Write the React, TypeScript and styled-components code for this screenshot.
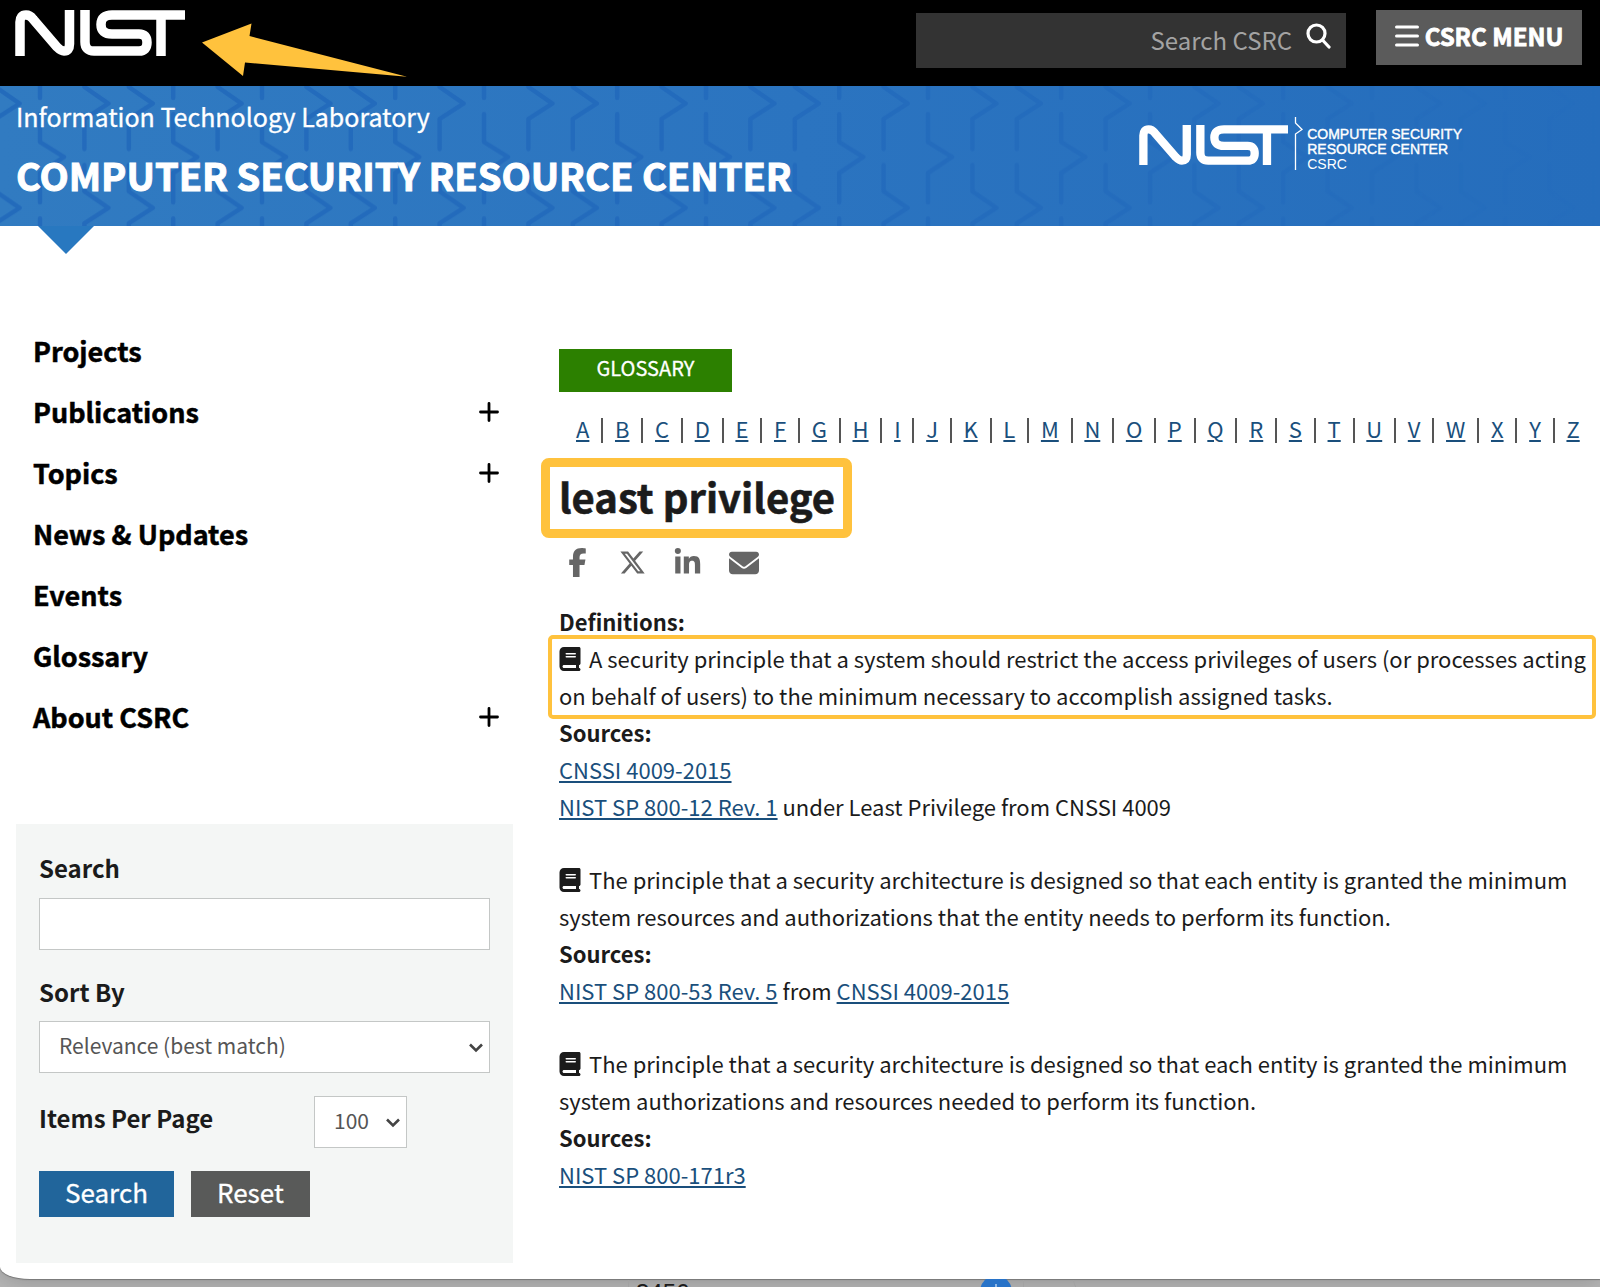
import React from "react";
import styled, { createGlobalStyle } from "styled-components";
import { FaFacebookF, FaXTwitter, FaLinkedinIn, FaEnvelope, FaBook } from "react-icons/fa6";

const GlobalStyle = createGlobalStyle`
  *, *::before, *::after { box-sizing: border-box; }
  body {
    margin: 0;
    background: #b6b6b6;
    color: #1b1b1b;
    font-family: "Noto Sans CJK SC", "Open Sans", sans-serif;
    font-size: 22px;
    line-height: 37px;
  }
  button, input, select { font: inherit; border-radius: 0; margin: 0; }
  a { color: #1a4f7c; text-decoration-thickness: 2px; text-underline-offset: 2px; }
`;

const Desktop = styled.div`
  overflow: hidden;
`;

const Sheet = styled.div`
  background: #fff;
  border-bottom-left-radius: 30px 12px;
  box-shadow: 0 1px 1px #777, 0 2px 24px rgba(0, 0, 0, 0.2);
  position: relative;
`;

const TopBar = styled.header`
  display: flex;
  align-items: flex-start;
  background: #000;
  height: 86px;
  padding: 10px 18px 0 15px;
`;

const HomeLink = styled.a`
  display: block;
  line-height: 0;
`;

const Arrow = styled.svg`
  margin: 12px auto 0 17px;
`;

const SiteSearch = styled.form`
  display: flex;
  align-items: center;
  width: 430px;
  height: 55px;
  margin: 3px 30px 0 0;
  background: #333;
`;

const SiteSearchInput = styled.input`
  flex: 1;
  min-width: 0;
  height: 55px;
  padding: 0 14px 3px 0;
  border: 0;
  background: transparent;
  color: #fff;
  font-size: 24px;
  text-align: right;
  &::placeholder { color: #a3a3a3; opacity: 1; }
`;

const IconButton = styled.button`
  padding: 0 15px 9px 0;
  border: 0;
  background: transparent;
  line-height: 0;
`;

const MenuButton = styled.button`
  display: flex;
  align-items: center;
  justify-content: center;
  gap: 6px;
  width: 206px;
  height: 55px;
  padding: 0 0 4px;
  border: 0;
  background: #5b5b5b;
  color: #fff;
  font-size: 24px;
  font-weight: 700;
  -webkit-text-stroke: 0.8px currentColor;
`;

const Banner = styled.div`
  position: relative;
  display: flex;
  justify-content: space-between;
  height: 140px;
  padding: 12px 138px 0 16px;
  background: linear-gradient(90deg, #317bc1, #2b74c0 50%, #256dbc);
  color: #fff;
`;

const BannerPattern = styled.svg`
  position: absolute;
  inset: 0;
  width: 100%;
  height: 100%;
`;

const BannerText = styled.div`
  position: relative;
`;

const LabName = styled.div`
  font-size: 25px;
  -webkit-text-stroke: 0.3px currentColor;
`;

const SiteName = styled.div`
  margin-top: 12px;
  font-size: 38px;
  font-weight: 700;
  line-height: 56px;
  -webkit-text-stroke: 1px currentColor;
`;

const BannerLogo = styled.div`
  position: relative;
  display: flex;
  align-items: flex-start;
  margin-top: 18px;
`;

const BannerMark = styled.div`
  padding-top: 9px;
  line-height: 0;
`;

const LogoWords = styled.div`
  padding: 11px 0 0 3px;
  font-family: "Liberation Sans", Arial, sans-serif;
  font-size: 14px;
  line-height: 15px;
`;

const LogoLine = styled.div<{ $strong?: boolean }>`
  -webkit-text-stroke: ${(p) => (p.$strong ? "0.4px #fff" : "0")};
`;

const Pointer = styled.div`
  position: absolute;
  left: 38px;
  top: 100%;
  border: 28px solid transparent;
  border-top-color: #2878c0;
  border-bottom: 0;
`;

const Columns = styled.div`
  display: grid;
  grid-template-columns: 497px minmax(0, 1fr);
  gap: 46px;
  padding: 94px 8px 16px 16px;
`;

const Nav = styled.nav`
  padding-bottom: 77px;
`;

const NavRow = styled.div`
  display: flex;
  align-items: center;
  justify-content: space-between;
  height: 61px;
  padding: 0 14px 0 17px;
`;

const NavLink = styled.a`
  color: #000;
  font-size: 27px;
  font-weight: 700;
  text-decoration: none;
  -webkit-text-stroke: 0.5px currentColor;
`;

const Expand = styled.button`
  padding: 0;
  border: 0;
  background: transparent;
  line-height: 0;
`;

const FilterPanel = styled.form`
  padding: 25px 23px 46px;
  background: #f4f6f5;
`;

const Label = styled.label`
  display: block;
  font-size: 24px;
  font-weight: 700;
  line-height: 37px;
`;

const TextBox = styled.input`
  display: block;
  width: 100%;
  height: 52px;
  margin: 12px 0 23px;
  padding: 0 18px;
  border: 1px solid #c4c7c6;
  background: #fff;
`;

const SelectWrap = styled.div`
  position: relative;
`;

const Select = styled.select`
  appearance: none;
  display: block;
  width: 100%;
  height: 52px;
  padding: 0 0 3px 19px;
  border: 1px solid #c4c7c6;
  background: #fff;
  color: #555;
  font-size: 21px;
`;

const Chevron = styled.svg`
  position: absolute;
  right: 6px;
  top: 22px;
  pointer-events: none;
`;

const SortField = styled.div`
  display: grid;
  gap: 11px;
`;

const PageSizeField = styled.div`
  display: grid;
  grid-template-columns: 275px 93px;
  align-items: start;
  padding: 23px 0;
  & > label { padding-top: 3px; }
`;

const Actions = styled.div`
  display: flex;
  gap: 17px;
`;

const ActionButton = styled.button<{ $tone: string }>`
  height: 46px;
  padding: 0 26px 4px;
  border: 0;
  background: ${(p) => p.$tone};
  color: #fff;
  font-size: 26px;
  line-height: 42px;
  -webkit-text-stroke: 0.3px currentColor;
`;

const Main = styled.main`
  padding-top: 29px;
`;

const Tag = styled.div`
  width: 173px;
  height: 43px;
  background: #2c8000;
  color: #fff;
  font-size: 20px;
  line-height: 38px;
  text-align: center;
  -webkit-text-stroke: 0.3px currentColor;
`;

const Letters = styled.ul`
  display: flex;
  align-items: center;
  justify-content: space-between;
  margin: 20px 12px 0 17px;
  padding: 0;
  list-style: none;
`;

const Letter = styled.li`
  padding-bottom: 4px;
  line-height: 33px;
`;

const Divider = styled.li`
  width: 2px;
  height: 25px;
  background: #555;
`;

const Term = styled.h1`
  width: fit-content;
  margin: 9px 0 0 -18px;
  padding: 1px 8px 4px 9px;
  border: 9px solid #ffc23d;
  border-radius: 8px;
  font-size: 40px;
  line-height: 57px;
  -webkit-text-stroke: 0.6px currentColor;
`;

const Share = styled.div`
  display: flex;
  align-items: center;
  gap: 27px;
  height: 31px;
  margin: 9px 0 25px;
  padding-left: 4px;
`;

const ShareLink = styled.a`
  color: #666;
  line-height: 0;
`;

const Definitions = styled.section`
  display: grid;
  gap: 36px;
`;

const Strong = styled.div`
  font-weight: 700;
`;

const Definition = styled.div<{ $marked?: boolean }>`
  position: relative;
  &::after {
    content: "";
    display: ${(p) => (p.$marked ? "block" : "none")};
    position: absolute;
    inset: -5px -4px -5px -11px;
    border: 4px solid #ffc23d;
    border-radius: 5px;
  }
`;

const BookIcon = styled(FaBook)`
  width: 22px;
  height: 24px;
  margin-right: 8px;
  vertical-align: -3px;
`;

const Behind = styled.div`
  height: 9px;
  padding-left: 628px;
  overflow: hidden;
  position: relative;
  font-family: "Liberation Sans", Arial, sans-serif;
  font-size: 24px;
  line-height: 27px;
`;

const BehindArt = styled.svg`
  position: absolute;
  left: 0;
  top: 0;
`;

const NistMark = ({ width, height }: { width: number; height: number }) => (
  <svg width={width} height={height} viewBox="0 0 170 46" preserveAspectRatio="none" fill="none" stroke="#fff" strokeWidth="9.5" aria-label="NIST">
    <path d="M5 46V12Q5 5 11 5Q15 5 18 9L42 37Q46 41 49 41Q54.500 41 54.500 34V0" />
    <path d="M70 0V32Q70 41 79 41H124Q132 41 132 32.500Q132 24 124 24H97Q86 24 86 14.500Q86 5 97 5H170" />
    <path d="M146 5V46" />
  </svg>
);

const Chev = () => (
  <Chevron width="16" height="10" viewBox="0 0 16 10" fill="none" stroke="#444" strokeWidth="2.600">
    <path d="M2 1.500L8 7.500L14 1.500" />
  </Chevron>
);

const COLUMN_KINDS = ["A", "B", "B", "A", "B"];

const Pattern = () => (
  <BannerPattern aria-hidden="true">
    <defs>
      <linearGradient id="fade">
        <stop offset="0" stopColor="#fff" />
        <stop offset="0.400" stopColor="#fff" stopOpacity="0.900" />
        <stop offset="0.700" stopColor="#fff" stopOpacity="0.600" />
        <stop offset="1" stopColor="#fff" stopOpacity="0" />
      </linearGradient>
      <mask id="fadeMask">
        <rect width="100%" height="100%" fill="url(#fade)" />
      </mask>
      <pattern id="traces" x="35" y="0" width="222" height="104.400" patternUnits="userSpaceOnUse">
        <g fill="none" stroke="#1f66ba" strokeWidth="4.500" strokeLinecap="round" strokeLinejoin="round">
          {COLUMN_KINDS.map((kind, i) => {
            const x = 5 + i * 44.4;
            const paths =
              kind === "A"
                ? [`M${x} -20V12`, `M${x} 28V56L${x + 24} 71L${x} 87V115`]
                : [`M${x} -25V1L${x + 24} 17.5L${x} 33V63`, `M${x} 79V105L${x + 24} 121`];
            return paths.map((d) => <path key={d} d={d} />);
          })}
        </g>
      </pattern>
    </defs>
    <rect width="100%" height="100%" fill="url(#traces)" mask="url(#fadeMask)" opacity="0.750" />
  </BannerPattern>
);

const NAV = [
  { name: "Projects" },
  { name: "Publications", more: true },
  { name: "Topics", more: true },
  { name: "News & Updates" },
  { name: "Events" },
  { name: "Glossary" },
  { name: "About CSRC", more: true },
];

const ALPHABET = "ABCDEFGHIJKLMNOPQRSTUVWXYZ".split("");

export default function App() {
  return (
    <Desktop>
      <GlobalStyle />
      <Sheet>
        <TopBar>
          <HomeLink href="#home"><NistMark width={170} height={46} /></HomeLink>
          <Arrow width="206" height="56" viewBox="0 0 206 56" aria-hidden="true">
            <path d="M0 20.500L49.500 1.500L47.500 14L205 54.700L43 40.500L41 54Z" fill="#ffc23d" />
          </Arrow>
          <SiteSearch role="search">
            <SiteSearchInput aria-label="Search CSRC" placeholder="Search CSRC" />
            <IconButton type="button" aria-label="Submit search">
              <svg width="25" height="26" viewBox="0 0 25 26" fill="none" stroke="#fff" strokeWidth="3.200" strokeLinecap="round">
                <circle cx="10.500" cy="10.500" r="8.500" />
                <path d="M16.500 17L23 24" />
              </svg>
            </IconButton>
          </SiteSearch>
          <MenuButton type="button">
            <svg width="24" height="22" viewBox="0 0 24 22" stroke="#fff" strokeWidth="3" strokeLinecap="round" aria-hidden="true">
              <path d="M1.500 2H22.500M1.500 11H22.500M1.500 20H22.500" />
            </svg>
            CSRC MENU
          </MenuButton>
        </TopBar>

        <Banner>
          <Pattern />
          <BannerText>
            <LabName>Information Technology Laboratory</LabName>
            <SiteName>COMPUTER SECURITY RESOURCE CENTER</SiteName>
          </BannerText>
          <BannerLogo>
            <BannerMark><NistMark width={149} height={40} /></BannerMark>
            <svg width="16" height="56" viewBox="0 0 16 56" fill="none" stroke="#fff" strokeWidth="1.300" aria-hidden="true">
              <path d="M7.500 1V7L14 13.500L7.500 18V54" />
            </svg>
            <LogoWords>
              <LogoLine $strong>COMPUTER SECURITY</LogoLine>
              <LogoLine $strong>RESOURCE CENTER</LogoLine>
              <LogoLine>CSRC</LogoLine>
            </LogoWords>
          </BannerLogo>
          <Pointer />
        </Banner>

        <Columns>
          <aside>
            <Nav>
              {NAV.map((item) => (
                <NavRow key={item.name}>
                  <NavLink href="#nav">{item.name}</NavLink>
                  {item.more && (
                    <Expand type="button" aria-label={`Expand ${item.name}`}>
                      <svg width="20" height="20" viewBox="0 0 20 20" stroke="#000" strokeWidth="2.800" strokeLinecap="round">
                        <path d="M10 1.500V18.500M1.500 10H18.500" />
                      </svg>
                    </Expand>
                  )}
                </NavRow>
              ))}
            </Nav>
            <FilterPanel>
              <Label htmlFor="keywords">Search</Label>
              <TextBox id="keywords" type="text" />
              <SortField>
                <Label htmlFor="sort">Sort By</Label>
                <SelectWrap>
                  <Select id="sort"><option>Relevance (best match)</option></Select>
                  <Chev />
                </SelectWrap>
              </SortField>
              <PageSizeField>
                <Label htmlFor="size">Items Per Page</Label>
                <SelectWrap>
                  <Select id="size"><option>100</option></Select>
                  <Chev />
                </SelectWrap>
              </PageSizeField>
              <Actions>
                <ActionButton type="button" $tone="#21659b">Search</ActionButton>
                <ActionButton type="reset" $tone="#595a59">Reset</ActionButton>
              </Actions>
            </FilterPanel>
          </aside>

          <Main>
            <Tag>GLOSSARY</Tag>
            <Letters>
              {ALPHABET.map((letter, i) => (
                <React.Fragment key={letter}>
                  {i > 0 && <Divider aria-hidden="true" />}
                  <Letter><a href="#letter">{letter}</a></Letter>
                </React.Fragment>
              ))}
            </Letters>
            <Term>least privilege</Term>
            <Share>
              <ShareLink href="#facebook" aria-label="Facebook"><FaFacebookF size={29} /></ShareLink>
              <ShareLink href="#x" aria-label="X"><FaXTwitter size={27} /></ShareLink>
              <ShareLink href="#linkedin" aria-label="LinkedIn"><FaLinkedinIn size={29} /></ShareLink>
              <ShareLink href="#mail" aria-label="Email"><FaEnvelope size={30} /></ShareLink>
            </Share>
            <Strong>Definitions:</Strong>
            <Definitions>
              <div>
                <Definition $marked>
                  <BookIcon />A security principle that a system should restrict the access privileges of users (or processes acting on behalf of users) to the minimum necessary to accomplish assigned tasks.
                </Definition>
                <Strong>Sources:</Strong>
                <div><a href="#source">CNSSI 4009-2015</a></div>
                <div><a href="#source">NIST SP 800-12 Rev. 1</a> under Least Privilege from CNSSI 4009</div>
              </div>
              <div>
                <Definition>
                  <BookIcon />The principle that a security architecture is designed so that each entity is granted the minimum system resources and authorizations that the entity needs to perform its function.
                </Definition>
                <Strong>Sources:</Strong>
                <div><a href="#source">NIST SP 800-53 Rev. 5</a> from <a href="#source">CNSSI 4009-2015</a></div>
              </div>
              <div>
                <Definition>
                  <BookIcon />The principle that a security architecture is designed so that each entity is granted the minimum system authorizations and resources needed to perform its function.
                </Definition>
                <Strong>Sources:</Strong>
                <div><a href="#source">NIST SP 800-171r3</a></div>
              </div>
            </Definitions>
          </Main>
        </Columns>
      </Sheet>
      <Behind>
        r3456
        <BehindArt width="1100" height="9" viewBox="0 0 1100 9" aria-hidden="true">
          <path d="M628.500 1V9M1023.500 1V9M1073 1L1076 9" stroke="#a2a2a2" fill="none" />
          <circle cx="996" cy="12.500" r="16" fill="#2873c8" />
          <path d="M996 5V9" stroke="#8fb8e6" strokeWidth="2" />
        </BehindArt>
      </Behind>
    </Desktop>
  );
}
